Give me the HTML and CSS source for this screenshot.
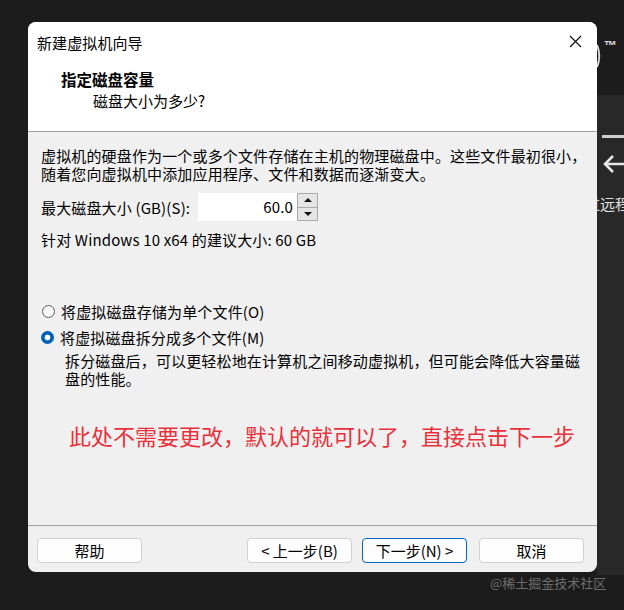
FILE: index.html
```html
<!DOCTYPE html>
<html lang="zh-CN">
<head>
    <meta charset="UTF-8">
    <meta name="viewport" content="width=device-width, initial-scale=1.0">
    <title>新建虚拟机向导</title>
    <link rel="stylesheet" href="styles.css">
</head>
<body>
    <div class="desktop">
        <div class="dialog">
            <div class="titlebar">
                <span class="title">新建虚拟机向导</span>
                <svg class="close" width="13" height="13" viewBox="0 0 13 13">
                    <path d="M1 1 L12 12 M12 1 L1 12" stroke="#111" stroke-width="1.2" fill="none"/>
                </svg>
            </div>

            <div class="header">
                <div class="heading">指定磁盘容量</div>
                <div class="subheading">磁盘大小为多少?</div>
            </div>

            <div class="content">
                <p class="intro">虚拟机的硬盘作为一个或多个文件存储在主机的物理磁盘中。这些文件最初很小，<br>随着您向虚拟机中添加应用程序、文件和数据而逐渐变大。</p>

                <div class="size-row">
                    <label class="size-label">最大磁盘大小 (GB)(S):</label>
                    <div class="spinbox">
                        <div class="spin-value">60.0</div>
                        <div class="spin-buttons">
                            <div class="spin-btn"><span class="arrow-up"></span></div>
                            <div class="spin-btn"><span class="arrow-down"></span></div>
                        </div>
                    </div>
                </div>

                <p class="hint">针对 Windows 10 x64 的建议大小: 60 GB</p>

                <div class="options">
                    <div class="option">
                        <span class="radio"></span>
                        <span>将虚拟磁盘存储为单个文件(O)</span>
                    </div>
                    <div class="option">
                        <span class="radio checked"></span>
                        <span>将虚拟磁盘拆分成多个文件(M)</span>
                    </div>
                    <p class="option-note">拆分磁盘后，可以更轻松地在计算机之间移动虚拟机，但可能会降低大容量磁<br>盘的性能。</p>
                </div>

                <p class="note">此处不需要更改，默认的就可以了，直接点击下一步</p>
            </div>

            <div class="footer">
                <button class="button">帮助</button>
                <div class="nav-buttons">
                    <button class="button">&lt; 上一步(B)</button>
                    <button class="button primary">下一步(N) &gt;</button>
                    <button class="button cancel">取消</button>
                </div>
            </div>
        </div>

        <div class="side">
            <div class="side-logo">
                <svg class="logo-ring" width="5" height="24" viewBox="0 0 5 24">
                    <path d="M0 1 Q4.5 12 0 23" stroke="#d8d8d8" stroke-width="2" fill="none"/>
                </svg>
                <span class="tm">™</span>
            </div>
            <div class="side-panel">
                <div class="side-bar"></div>
                <svg class="side-arrow" width="22" height="22" viewBox="0 0 22 22">
                    <path d="M22 11 H3 M11 3 L3 11 L11 19" stroke="#e6e6e6" stroke-width="2.6" fill="none"/>
                </svg>
                <div class="side-text">通过远程桌面</div>
            </div>
        </div>
    </div>

    <div class="watermark">@稀土掘金技术社区</div>
</body>
</html>
```

FILE: styles.css
```css
body {
    margin: 0;
    padding: 0;
    width: 624px;
    height: 610px;
    overflow: hidden;
    background-color: #1c1c1c;
    font-family: "Noto Sans CJK SC", "Liberation Sans", sans-serif;
    color: #000;
}

.desktop {
    display: flex;
    padding: 22px 0 0 28px;
}

.dialog {
    width: 569px;
    height: 550px;
    flex-shrink: 0;
    display: flex;
    flex-direction: column;
    background: #f0f0f0;
    border-radius: 8px;
    overflow: hidden;
    font-size: 15px;
}

.titlebar {
    height: 40px;
    display: flex;
    align-items: center;
    justify-content: space-between;
    padding: 0 15px 0 9px;
    background: #fff;
}

.title {
    letter-spacing: 0.1px;
}

.close {
    margin-top: -2px;
}

.header {
    height: 62px;
    padding: 7px 0 0 33px;
    background: #fff;
    border-bottom: 1px solid #a0a0a0;
}

.heading {
    font-weight: bold;
    font-size: 15.5px;
    line-height: 20px;
}

.subheading {
    margin: 2px 0 0 32px;
    line-height: 20px;
}

.content {
    flex: 1;
    padding: 16px 4px 0 13px;
    letter-spacing: 0.15px;
}

.content p {
    margin: 0;
}

/* multi-line paragraphs: Latin font first keeps the line boxes at 18px */
.intro,
.option-note {
    font-family: "Liberation Sans", "Noto Sans CJK SC", sans-serif;
    line-height: 18px;
    white-space: nowrap;
}

.size-row {
    display: flex;
    align-items: center;
    margin-top: 9px;
    height: 28px;
}

.size-label {
    width: 157px;
    flex-shrink: 0;
}

.spinbox {
    display: flex;
    height: 28px;
}

.spin-value {
    width: 95px;
    padding-right: 4px;
    background: #fff;
    text-align: right;
    line-height: 28px;
}

.spin-buttons {
    width: 19px;
    display: flex;
    flex-direction: column;
    border: 1px solid #a9a9a9;
    background: #e5e5e5;
}

.spin-btn {
    flex: 1;
    display: flex;
    align-items: center;
    justify-content: center;
}

.spin-btn + .spin-btn {
    border-top: 1px solid #a9a9a9;
}

.arrow-up {
    border-left: 4px solid transparent;
    border-right: 4px solid transparent;
    border-bottom: 4px solid #111;
}

.arrow-down {
    border-left: 4px solid transparent;
    border-right: 4px solid transparent;
    border-top: 4px solid #111;
}

.hint {
    margin-top: 10px !important;
    line-height: 18px;
}

.options {
    margin-top: 52px;
}

.option {
    display: flex;
    align-items: center;
    gap: 6px;
    height: 20px;
}

.option + .option {
    margin-top: 6px;
}

.radio {
    width: 11px;
    height: 11px;
    border: 1px solid #5a5a5a;
    border-radius: 50%;
    background: #f7f7f7;
    margin-left: 1px;
}

.radio.checked {
    width: 13px;
    height: 13px;
    margin-left: 0;
    border: none;
    background: radial-gradient(circle, #fff 0 2.6px, #005fb8 3.2px);
}

.option-note {
    margin: 6px 0 0 24px !important;
}

.note {
    margin: 31px 0 0 28px !important;
    font-size: 22px;
    line-height: 30px;
    letter-spacing: 0;
    color: #e8303a;
}

.footer {
    height: 47px;
    display: flex;
    align-items: flex-start;
    justify-content: space-between;
    padding: 12px 13px 0 9px;
    border-top: 1px solid #a0a0a0;
    box-sizing: border-box;
}

.nav-buttons {
    display: flex;
}

.button {
    width: 105px;
    height: 25px;
    padding: 0;
    font-family: inherit;
    font-size: 15px;
    line-height: 22px;
    color: #000;
    background: #fdfdfd;
    border: 1px solid #d0d0d0;
    border-radius: 4px;
}

.primary {
    margin-left: 10px;
    border-color: #0067c0;
}

.cancel {
    margin-left: 12px;
}

.side {
    flex: 1;
    overflow: hidden;
    height: 553px;
    display: flex;
    flex-direction: column;
}

.side-logo {
    height: 73px;
    display: flex;
    align-items: flex-start;
}

.logo-ring {
    margin-top: 22px;
}

.tm {
    margin: 17px 0 0 2px;
    font-family: "Liberation Sans", sans-serif;
    font-weight: bold;
    font-size: 13px;
    line-height: 14px;
    color: #e0e0e0;
}

.side-panel {
    flex: 1;
    background: #282828;
    display: flex;
    flex-direction: column;
}

.side-bar {
    height: 3px;
    margin: 40px 0 0 5px;
    background: #cfcfcf;
}

.side-arrow {
    margin: 15px 0 0 5px;
}

.side-text {
    margin: 18px 0 0 -27px;
    white-space: nowrap;
    font-size: 15px;
    color: #e0e0e0;
}

.watermark {
    position: absolute;
    left: 490px;
    top: 573px;
    font-size: 13px;
    color: #6e6e6e;
}
```
